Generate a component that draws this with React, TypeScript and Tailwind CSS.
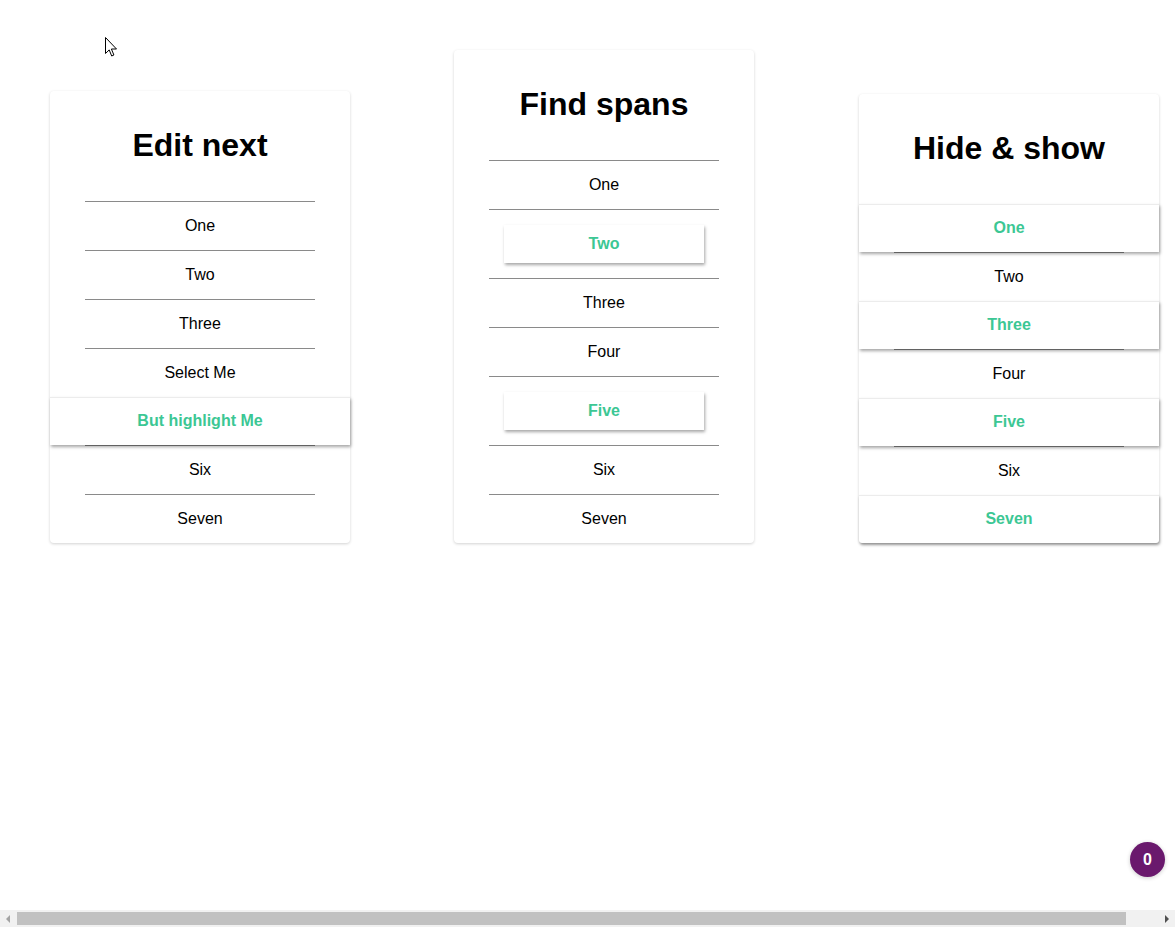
type Row = { label: string; hot?: boolean };

const font = { fontFamily: '"Liberation Sans", Arial, sans-serif' };

const editNext: Row[] = [
  { label: "One" },
  { label: "Two" },
  { label: "Three" },
  { label: "Select Me" },
  { label: "But highlight Me", hot: true },
  { label: "Six" },
  { label: "Seven" },
];

const findSpans: Row[] = [
  { label: "One" },
  { label: "Two", hot: true },
  { label: "Three" },
  { label: "Four" },
  { label: "Five", hot: true },
  { label: "Six" },
  { label: "Seven" },
];

const hideShow: Row[] = [
  { label: "One", hot: true },
  { label: "Two" },
  { label: "Three", hot: true },
  { label: "Four" },
  { label: "Five", hot: true },
  { label: "Six" },
  { label: "Seven", hot: true },
];

function Divider() {
  return <div className="mx-[35px] h-px bg-[#8a8a8a]" />;
}

function PlainRow({ label }: { label: string }) {
  return (
    <div>
      <Divider />
      <div className="flex h-12 items-center justify-center text-[16px] text-black">
        {label}
      </div>
    </div>
  );
}

// full-width raised row (no divider of its own)
function RaisedRow({ label, last }: { label: string; last?: boolean }) {
  return (
    <div
      className={
        "relative z-10 flex h-12 items-center justify-center border-t border-[#ececec] bg-white pb-px text-[16px] font-bold text-[#3cc794] shadow-[1px_2px_3px_rgba(0,0,0,0.35)] " +
        (last ? "rounded-b-[3px]" : "")
      }
    >
      {label}
    </div>
  );
}

// divider, then a small raised chip inside the row
function ChipRow({ label }: { label: string }) {
  return (
    <div>
      <Divider />
      <div className="flex justify-center py-[15px]">
        <div className="flex h-[38px] w-[200px] items-center justify-center bg-white text-[16px] font-bold text-[#3cc794] shadow-[1px_2px_3px_rgba(0,0,0,0.35)]">
          {label}
        </div>
      </div>
    </div>
  );
}

function Card({
  title,
  rows,
  mode,
  className = "",
}: {
  title: string;
  rows: Row[];
  mode: "raised" | "chip";
  className?: string;
}) {
  return (
    <div
      className={
        "w-[300px] shrink-0 rounded-[4px] bg-white shadow-[0_1px_3px_rgba(0,0,0,0.18)] " +
        className
      }
    >
      <div className="flex h-[110px] items-start justify-center pt-[36px]">
        <h1 className="text-[32px] leading-[37px] font-bold text-black">{title}</h1>
      </div>
      {rows.map((r, i) =>
        r.hot ? (
          mode === "raised" ? (
            <RaisedRow key={r.label} label={r.label} last={i === rows.length - 1} />
          ) : (
            <ChipRow key={r.label} label={r.label} />
          )
        ) : (
          <PlainRow key={r.label} label={r.label} />
        ),
      )}
    </div>
  );
}

function Cursor() {
  return (
    <svg
      className="absolute left-[105px] top-[37px] z-20"
      width="13"
      height="21"
      viewBox="0 0 13 21"
    >
      <path
        d="M0.5 0.5 L0.5 16.5 L4.2 12.9 L6.7 19 L8.9 18 L6.4 12 L11.5 12 Z"
        fill="white"
        stroke="black"
        strokeWidth="1"
        strokeLinejoin="miter"
      />
    </svg>
  );
}

export default function App() {
  return (
    <div className="relative flex h-[927px] w-full flex-col overflow-hidden bg-white" style={font}>
      <Cursor />

      <div className="flex-1">
        <div className="flex items-end gap-[104px] pl-[50px] pt-[50px]">
          <Card title="Edit next" rows={editNext} mode="raised" />
          <Card title="Find spans" rows={findSpans} mode="chip" />
          <Card title="Hide & show" rows={hideShow} mode="raised" className="ml-px" />
        </div>
      </div>

      {/* horizontal scrollbar */}
      <div className="flex h-[17px] items-center bg-[#f1f1f1]">
        <div className="flex w-[17px] items-center justify-center">
          <svg width="5" height="8" viewBox="0 0 5 8">
            <path d="M4 0 L0 4 L4 8 Z" fill="#a3a3a3" />
          </svg>
        </div>
        <div className="h-[13px] w-[1109px] bg-[#c1c1c1]" />
        <div className="flex-1" />
        <div className="flex w-[17px] items-center justify-center">
          <svg width="5" height="8" viewBox="0 0 5 8">
            <path d="M1 0 L5 4 L1 8 Z" fill="#505050" />
          </svg>
        </div>
      </div>

      <div className="absolute bottom-[50px] right-[10px] flex h-[35px] w-[35px] items-center justify-center rounded-full bg-[#6a196d] text-[16px] font-bold text-white shadow-[0_1px_4px_rgba(0,0,0,0.2)]">
        0
      </div>
    </div>
  );
}
